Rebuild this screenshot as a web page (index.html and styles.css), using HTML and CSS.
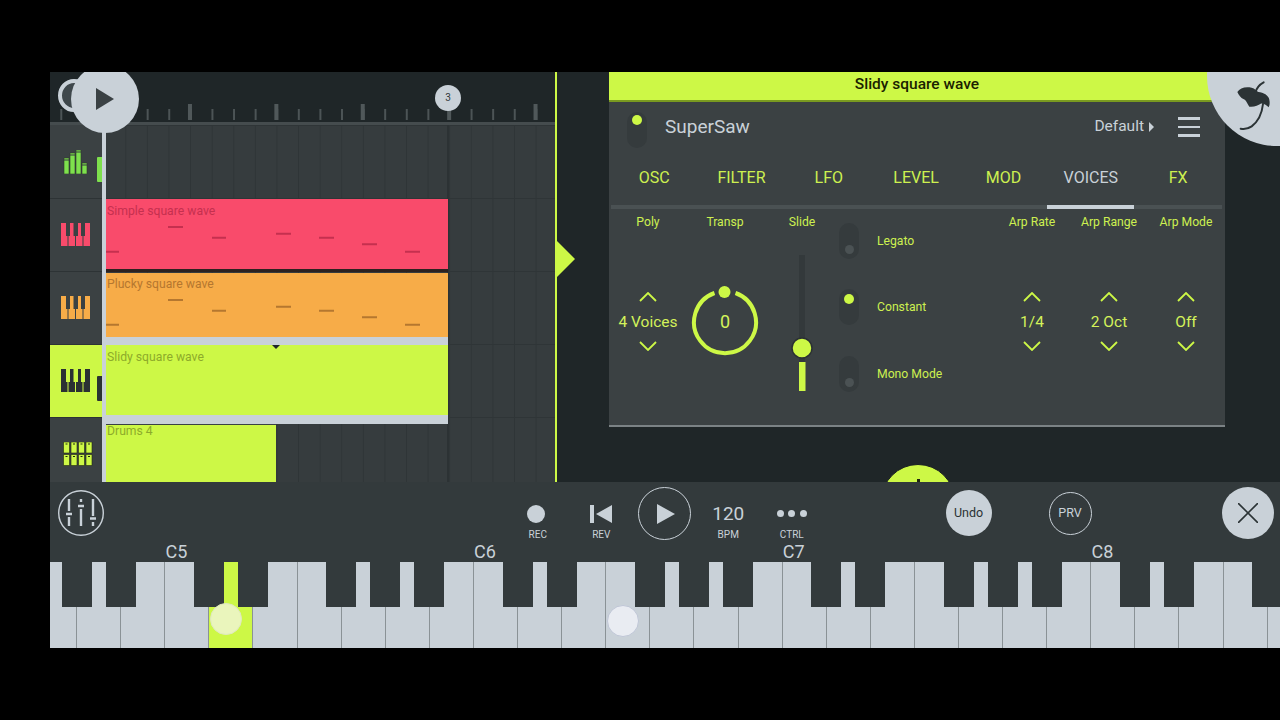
FILE: index.html

```html
<!DOCTYPE html>
<html>
	<head>
		<title>Slidy square wave</title>
		<meta charset="UTF-8">
		<link rel="stylesheet" href="styles.css">
	</head>
	<body>
		<div class="app">
			<div class="top">
				<div class="playlist">
					<div class="ruler"></div>
					<div class="tracks">
						<div class="icons">
							<div class="icon-row first">
								<svg class="ticon" viewBox="0 0 34 24"><path fill="#7ee04d" stroke="#2b3a2a" stroke-width=".6" d="M3 8h5v16H3zM9 3h5v21H9zM15 0h5v24h-5zM21 13h5v11h-5z"/><path stroke="#343a3c" d="M3 10h5M9 5h5M15 2h5M21 15h5"/></svg>
								<span class="vol green"></span>
							</div>
							<div class="icon-row pink">
								<svg class="ticon" viewBox="0 0 34 24"><path fill="currentColor" d="M0 0H5V13H6.5V23H0ZM9 0H12.5V13H14V23H7.5V13H9ZM17 0H20V13H21.5V23H15V13H17ZM24 0H29V23H22.5V13H24Z"/></svg>
							</div>
							<div class="icon-row orange">
								<svg class="ticon" viewBox="0 0 34 24"><path fill="currentColor" d="M0 0H5V13H6.5V23H0ZM9 0H12.5V13H14V23H7.5V13H9ZM17 0H20V13H21.5V23H15V13H17ZM24 0H29V23H22.5V13H24Z"/></svg>
							</div>
							<div class="icon-row selected">
								<svg class="ticon" viewBox="0 0 34 24"><path fill="currentColor" d="M0 0H5V13H6.5V23H0ZM9 0H12.5V13H14V23H7.5V13H9ZM17 0H20V13H21.5V23H15V13H17ZM24 0H29V23H22.5V13H24Z"/></svg>
								<span class="vol dark"></span>
							</div>
							<div class="icon-row lime">
								<svg class="ticon" viewBox="0 0 34 24"><path fill="currentColor" stroke="#20280f" stroke-width=".6" d="M2.5 0h6v11h-6zM10 0h6v11h-6zM17.5 0h6v11h-6zM25 0h6v11h-6zM2.5 12.5h6v11h-6zM10 12.5h6v11h-6zM17.5 12.5h6v11h-6zM25 12.5h6v11h-6z"/><path stroke="#20280f" d="M4.5 2h2M12 2h2M19.5 2h2M27 2h2M4.5 14.500h2M12 14.500h2M19.5 14.500h2M27 14.500h2"/></svg>
							</div>
						</div>
						<div class="lanes">
							<div class="clip clip-simple">
								<div class="clip-name">Simple square wave</div>
								<svg class="notes" viewBox="0 0 342 40"><path stroke="currentColor" stroke-width="2" d="M62 4h15M0 28.700h13M106 14.700h14M170 10.700h15M213 14.700h15M256 21.300h15M299 28.700h15"/></svg>
							</div>
							<div class="clip clip-plucky">
								<div class="clip-name">Plucky square wave</div>
								<svg class="notes" viewBox="0 0 342 40"><path stroke="currentColor" stroke-width="2" d="M62 4h15M0 28.700h13M106 14.700h14M170 10.700h15M213 14.700h15M256 21.300h15M299 28.700h15"/></svg>
							</div>
							<div class="clip clip-slidy">
								<div class="clip-name">Slidy square wave</div>
								<span class="clip-mark"></span>
							</div>
							<div class="clip clip-drums">
								<div class="clip-name">Drums 4</div>
							</div>
						</div>
					</div>
				</div>
				<div class="panel">
					<div class="panel-title">Slidy square wave</div>
					<div class="panel-head">
						<div class="toggle on head-toggle"><span></span></div>
						<div class="synth-name">SuperSaw</div>
						<div class="preset">Default</div>
						<span class="preset-arrow"></span>
						<div class="burger"><span></span><span></span><span></span></div>
					</div>
					<div class="tabs">
						<div class="tab">OSC</div>
						<div class="tab">FILTER</div>
						<div class="tab">LFO</div>
						<div class="tab">LEVEL</div>
						<div class="tab">MOD</div>
						<div class="tab active">VOICES</div>
						<div class="tab">FX</div>
					</div>
					<div class="voices">
						<div class="col">
							<div class="col-label">Poly</div>
							<div class="stepper">
								<svg class="chev" viewBox="0 0 18 10"><path d="M1 9L9 1L17 9"/></svg>
								<div class="step-value">4 Voices</div>
								<svg class="chev" viewBox="0 0 18 10"><path d="M1 1L9 9L17 1"/></svg>
							</div>
						</div>
						<div class="col">
							<div class="col-label">Transp</div>
							<svg class="knob" viewBox="0 0 72 72">
								<path class="knob-ring" d="M25.500 7A31 31 0 1 0 46.500 7"/>
								<circle class="knob-dot" cx="35.500" cy="6" r="6"/>
								<text class="knob-value" x="36" y="42" text-anchor="middle">0</text>
							</svg>
						</div>
						<div class="col">
							<div class="col-label">Slide</div>
							<svg class="slider" viewBox="0 0 24 140">
								<rect x="9" y="3" width="6" height="136" fill="#33393b"/>
								<rect x="9" y="110" width="6.500" height="29" fill="#cdf846"/>
								<circle cx="12" cy="96" r="10" fill="#cdf846" stroke="#2b3133" stroke-width="1.500"/>
							</svg>
						</div>
						<div class="switches">
							<div class="switch"><div class="toggle"><span></span></div><div class="switch-name">Legato</div></div>
							<div class="switch"><div class="toggle on"><span></span></div><div class="switch-name">Constant</div></div>
							<div class="switch"><div class="toggle"><span></span></div><div class="switch-name">Mono Mode</div></div>
						</div>
						<div class="col">
							<div class="col-label">Arp Rate</div>
							<div class="stepper">
								<svg class="chev" viewBox="0 0 18 10"><path d="M1 9L9 1L17 9"/></svg>
								<div class="step-value">1/4</div>
								<svg class="chev" viewBox="0 0 18 10"><path d="M1 1L9 9L17 1"/></svg>
							</div>
						</div>
						<div class="col">
							<div class="col-label">Arp Range</div>
							<div class="stepper">
								<svg class="chev" viewBox="0 0 18 10"><path d="M1 9L9 1L17 9"/></svg>
								<div class="step-value">2 Oct</div>
								<svg class="chev" viewBox="0 0 18 10"><path d="M1 1L9 9L17 1"/></svg>
							</div>
						</div>
						<div class="col">
							<div class="col-label">Arp Mode</div>
							<div class="stepper">
								<svg class="chev" viewBox="0 0 18 10"><path d="M1 9L9 1L17 9"/></svg>
								<div class="step-value">Off</div>
								<svg class="chev" viewBox="0 0 18 10"><path d="M1 1L9 9L17 1"/></svg>
							</div>
						</div>
					</div>
				</div>
				<!-- things lying over the panels -->
				<div class="loop-ring"></div>
				<div class="big-play"><span></span></div>
				<div class="marker">3</div>
				<span class="pos-arrow"></span>
				<div class="add-btn"><span></span></div>
				<svg class="logo" viewBox="0 12 270 234">
					<circle cx="261" cy="24" r="210" fill="#c9d1d8"/>
					<path fill="#2b3335" d="M142 72C150 60 165 55 185 59C195 61 198 69 205 72C220 73 236 82 238 95C240 105 239 112 236 118C228 110 220 106 212 107C205 112 192 118 178 116C170 105 170 97 160 93C153 90 146 82 142 72Z"/>
					<path fill="none" stroke="#2b3335" stroke-width="6" stroke-linecap="round" d="M197 72C200 60 208 50 221 43M219 108C216 135 205 160 185 175C175 182 162 184 152 182"/>
				</svg>
			</div>
			<div class="bottom">
				<div class="controls">
					<svg class="mixer" viewBox="0 0 46 46">
						<circle cx="23" cy="23" r="22.300" fill="none" stroke="#c9d1d8" stroke-width="1.400"/>
						<path fill="none" stroke="#c9d1d8" stroke-width="2.400" d="M11 9v12M11 27v9M8 24h6M23 9v3M20 16h6M23 19v17M35 9v17M32 28.500h6M35 32v4"/>
					</svg>
					<div class="transport">
						<div class="tool">
							<div class="tool-icon"><span class="rec-dot"></span></div>
							<div class="tool-label">REC</div>
						</div>
						<div class="tool">
							<div class="tool-icon"><svg class="rev" viewBox="0 0 22 18"><path fill="#c9d1d8" d="M0 0h4v18H0zM22 0v18L6 9z"/></svg></div>
							<div class="tool-label">REV</div>
						</div>
						<div class="tool">
							<div class="play-ring"><span></span></div>
						</div>
						<div class="tool">
							<div class="tool-icon bpm">120</div>
							<div class="tool-label">BPM</div>
						</div>
						<div class="tool">
							<div class="tool-icon dots"><span></span><span></span><span></span></div>
							<div class="tool-label">CTRL</div>
						</div>
					</div>
					<div class="undo">Undo</div>
					<div class="prv">PRV</div>
					<div class="close">
						<svg viewBox="0 0 20 20"><path stroke="#2b3335" stroke-width="1.600" d="M0 0L20 20M20 0L0 20"/></svg>
					</div>
				</div>
				<div class="octaves">
					<div class="octave">C5</div>
					<div class="octave">C6</div>
					<div class="octave">C7</div>
					<div class="octave">C8</div>
				</div>
				<div class="keys">
					<div class="whites">
						<div class="white"></div><div class="white"></div><div class="white"></div><div class="white"></div>
						<div class="white pressed"></div><div class="white"></div><div class="white"></div><div class="white"></div>
						<div class="white"></div><div class="white"></div><div class="white"></div><div class="white"></div>
						<div class="white"></div><div class="white"></div><div class="white"></div><div class="white"></div>
						<div class="white"></div><div class="white"></div><div class="white"></div><div class="white"></div>
						<div class="white"></div><div class="white"></div><div class="white"></div><div class="white"></div>
						<div class="white"></div><div class="white"></div><div class="white"></div><div class="white"></div>
						<div class="white"></div>
					</div>
					<div class="blacks">
						<div class="black"></div><div class="black gap"></div>
						<div class="black"></div><div class="black gap"></div>
						<div class="black"></div><div class="black"></div><div class="black gap"></div>
						<div class="black"></div><div class="black gap"></div>
						<div class="black"></div><div class="black"></div><div class="black gap"></div>
						<div class="black"></div><div class="black gap"></div>
						<div class="black"></div><div class="black"></div><div class="black gap"></div>
						<div class="black"></div><div class="black gap"></div>
						<div class="black"></div>
					</div>
					<div class="touch touch-lime"></div>
					<div class="touch touch-white"></div>
				</div>
			</div>
		</div>
	</body>
</html>
```

FILE: styles.css

```css
/* common */
html, body {
	margin: 0; padding: 0; background-color: #000; height: 720px; overflow: hidden;
}
* {
	font-family: "Roboto", "Liberation Sans", sans-serif; box-sizing: border-box;
}
.app {
	position: relative; width: 1230px; height: 576px; margin: 72px 0 0 50px; overflow: hidden; display: flex; flex-direction: column;
}
.top {
	position: relative; display: flex; height: 410px; background-color: #1f2628; overflow: hidden; flex: none;
}
.bottom {
	height: 166px; background-color: #333a3c; display: flex; flex-direction: column; flex: none;
}

/* playlist */
.playlist {
	width: 507px; border-right: 2px solid #cdf846; display: flex; flex-direction: column; flex: none;
}
.ruler {
	height: 53px; flex: none; border-bottom: 3px solid #454c4e; background-color: #1f2628; background-repeat: repeat-x;
	background-image:
		linear-gradient(to right, #50585a 4px, transparent 4px),
		linear-gradient(to right, #4c5456 2px, transparent 2px);
	background-size: 86.400px 16px, 21.600px 11px;
	background-position: 51.600px 32px, 10.300px 37px;
}
.tracks {
	flex: 1; display: flex; min-height: 0; overflow: hidden;
}
.icons {
	width: 56px; flex: none; border-right: 4px solid #c9d1d8; background-color: #3b4143;
}
.icon-row {
	height: 73px; display: flex; align-items: center; justify-content: space-between; padding-left: 11px; border-bottom: 1px solid #2d3335;
}
.icon-row.first { height: 74px; }
.icon-row.pink { color: #f94b6b; }
.icon-row.orange { color: #f7ac48; }
.icon-row.lime { color: #cdf846; }
.icon-row.selected { color: #2b3133; background-color: #cdf846; }
.ticon {
	width: 34px; height: 24px; flex: none;
}
.vol {
	width: 5px; align-self: flex-end; margin-bottom: 16px; border-radius: 1px 0 0 1px;
}
.vol.green { height: 25px; background-color: #7ee04d; }
.vol.dark { height: 25px; background-color: #2b3133; }

.lanes {
	flex: 1; padding-top: 74px; background-color: #363c3e;
	background-image:
		linear-gradient(to right, #2c3234 2px, transparent 2px),
		linear-gradient(to right, #2f3537 1px, transparent 1px),
		linear-gradient(#2f3537 1px, transparent 1px);
	background-size: 100% 100%, 21.600px 100%, 100% 73px;
	background-position: 341px 0, 19.300px 0, 0 0;
	background-repeat: no-repeat, repeat, repeat;
}
.clip {
	width: 342px; display: flex; flex-direction: column; position: relative;
}
.clip-name {
	font-size: 12.200px; padding-left: 1px; line-height: 24px;
}
.notes {
	display: block; width: 342px; height: 40px;
}
.clip-simple {
	height: 73px; background-color: #f94b6b; color: #c5304f; border-bottom: 3px solid #2d2220; margin-bottom: 1px;
}
.clip-plucky {
	height: 72px; background-color: #f7ac48; color: #b5772f; border-bottom: 8px solid #c9d1d8;
}
.clip-plucky .clip-name { line-height: 23px; }
.clip-slidy {
	height: 79px; background-color: #cdf846; color: #8dab2a; border-bottom: 9px solid #c9d1d8;
}
.clip-drums {
	height: 60px; width: 170px; background-color: #cdf846; color: #8dab2a; border-top: 1px solid #3a4144;
}
.clip-drums .clip-name { line-height: 13px; }
.clip-mark {
	position: absolute; left: 166px; top: 0; width: 0; height: 0; border-left: 4px solid transparent; border-right: 4px solid transparent; border-top: 4px solid #1f2628;
}

/* instrument panel */
.panel {
	width: 616px; height: 355px; margin-left: 52px; background-color: #3b4143; border-bottom: 2px solid #7b8285; flex: none; display: flex; flex-direction: column;
}
.panel-title {
	height: 30px; flex: none; background-color: #cdf846; border-bottom: 2px solid #7a9a20; color: #1a2200; font-size: 15.500px; font-weight: 500; text-align: center; line-height: 25px;
}
.panel-head {
	height: 58px; flex: none; display: flex; align-items: center; padding-left: 18px; position: relative;
}
.toggle {
	width: 20px; height: 36px; border-radius: 10px; background-color: #353b3d; display: flex; flex-direction: column; justify-content: flex-end; align-items: center; padding: 5px 0; flex: none;
}
.toggle span {
	width: 9px; height: 9px; border-radius: 50%; background-color: #4b5254;
}
.toggle.on { justify-content: flex-start; }
.toggle.on span { width: 10px; height: 10px; background-color: #cdf846; }
.head-toggle {
	margin-top: -3px; padding-top: 3px;
}
.synth-name {
	margin-left: 18px; font-size: 19px; color: #c9d1d8; margin-top: -10px;
}
.preset {
	margin-left: auto; font-size: 15.500px; color: #c9d1d8; margin-top: -10px;
}
.preset-arrow {
	width: 0; height: 0; border-left: 5px solid #c9d1d8; border-top: 5px solid transparent; border-bottom: 5px solid transparent; margin: -8px 24px 0 5px;
}
.burger {
	width: 22px; margin-right: 25px; display: flex; flex-direction: column; gap: 6px; margin-top: -8px;
}
.burger span {
	height: 2.500px; background-color: #c9d1d8;
}
.tabs {
	display: grid; grid-template-columns: repeat(7, 87.330px); padding-left: 1.500px; height: 49px; flex: none;
}
.tab {
	color: #cdf050; font-size: 16px; text-align: center; border-bottom: 4px solid #4a5153; padding-top: 8px; line-height: 20px;
}
.tab.active {
	color: #c9d1d8; border-bottom-color: #c9d1d8;
}

/* voices page */
.voices {
	display: flex; flex: 1; padding: 6px 0 0 .5px;
}
.col {
	width: 77px; flex: none; display: flex; flex-direction: column; align-items: center;
}
.col-label {
	color: #cdf050; font-size: 12.200px; line-height: 14px; white-space: nowrap;
}
.stepper {
	margin-top: 63px; display: flex; flex-direction: column; align-items: center; gap: 9.500px;
}
.chev {
	width: 18px; height: 10px; display: block;
}
.chev path {
	fill: none; stroke: #cdf846; stroke-width: 1.800;
}
.step-value {
	color: #d4f25a; font-size: 15.500px; line-height: 20px; white-space: nowrap;
}
.knob {
	width: 72px; height: 72px; margin-top: 57px; display: block;
}
.knob-ring {
	fill: none; stroke: #cdf846; stroke-width: 4;
}
.knob-dot {
	fill: #cdf846;
}
.knob-value {
	fill: #d4f25a; font-size: 18px;
}
.slider {
	width: 24px; height: 140px; margin-top: 23px; display: block;
}
.switches {
	width: 153px; flex: none; display: flex; flex-direction: column; gap: 30.500px; padding-top: 7.500px; margin-left: -1.500px; margin-right: 1.500px;
}
.switch {
	display: flex; align-items: center;
}
.switch-name {
	margin-left: 18px; color: #cdf050; font-size: 12.200px; white-space: nowrap;
}

/* overlays */
.big-play {
	position: absolute; left: 21px; top: -7px; width: 68px; height: 68px; border-radius: 50%; background-color: #c9d1d8; display: flex; align-items: center; justify-content: center;
}
.big-play span {
	width: 0; height: 0; border-left: 18px solid #3a4144; border-top: 11px solid transparent; border-bottom: 11px solid transparent;
}
.loop-ring {
	position: absolute; left: 8px; top: 7px; width: 32px; height: 33px; border-radius: 50%; background-color: #3f484c; border: 4.500px solid #c9d1d8;
}
.marker {
	position: absolute; left: 385px; top: 13px; width: 26px; height: 26px; border-radius: 50%; background-color: #c9d1d8; color: #333a3c; font-size: 10px; text-align: center; line-height: 26px;
}
.pos-arrow {
	position: absolute; left: 507px; top: 169px; width: 0; height: 0; border-left: 18px solid #cdf846; border-top: 18px solid transparent; border-bottom: 18px solid transparent;
}
.add-btn {
	position: absolute; left: 831px; top: 392px; width: 74px; height: 74px; border-radius: 50%; background-color: #cdf846; border: 1px solid #1a2022;
}
.add-btn span {
	display: block; width: 3px; height: 4px; background-color: #20280f; margin: 14px auto 0;
}
.logo {
	position: absolute; right: 0; top: 0; width: 90px; height: 78px;
}

/* controls */
.controls {
	height: 60px; flex: none; display: flex; align-items: center; padding: 2px 0 0 8px;
}
.mixer {
	width: 46px; height: 46px; flex: none;
}
.transport {
	display: flex; margin-left: 402px; align-self: flex-start; padding-top: 17px; flex: none;
}
.tool {
	width: 63.500px; display: flex; flex-direction: column; align-items: center;
}
.tool-icon {
	height: 25px; margin-bottom: 2px; display: flex; align-items: center; justify-content: center;
}
.tool-label {
	color: #c9d1d8; font-size: 10px; line-height: 14px;
}
.rec-dot {
	width: 18px; height: 18px; border-radius: 50%; background-color: #c9d1d8; margin-left: -4px;
}
.rev {
	width: 22px; height: 18px; display: block;
}
.play-ring {
	width: 53px; height: 53px; margin-top: -14px; border: 1.400px solid #c9d1d8; border-radius: 50%; display: flex; align-items: center; justify-content: center;
}
.play-ring span {
	width: 0; height: 0; border-left: 18px solid #c9d1d8; border-top: 10px solid transparent; border-bottom: 10px solid transparent; margin-left: 3px;
}
.bpm {
	color: #c9d1d8; font-size: 19px;
}
.dots {
	gap: 4.500px;
}
.dots span {
	width: 7px; height: 7px; border-radius: 50%; background-color: #c9d1d8;
}
.undo {
	width: 46px; height: 46px; margin-left: 122px; border-radius: 50%; background-color: #c9d1d8; color: #2b3335; font-size: 12.500px; text-align: center; line-height: 46px; flex: none;
}
.prv {
	width: 43px; height: 43px; margin-left: 57px; border-radius: 50%; border: 1.400px solid #c9d1d8; color: #c9d1d8; font-size: 12.500px; text-align: center; line-height: 40px; flex: none;
}
.close {
	width: 52px; height: 52px; margin-left: 130px; border-radius: 50%; background-color: #c9d1d8; display: flex; align-items: center; justify-content: center; flex: none;
}
.close svg {
	width: 20px; height: 20px;
}
.octaves {
	height: 20px; flex: none; display: flex; margin-left: -28px;
}
.octave {
	width: 308.700px; flex: none; text-align: center; color: #c9d1d8; font-size: 18px; line-height: 20px;
}

/* keyboard */
.keys {
	position: relative; height: 86px; flex: none; overflow: hidden;
}
.whites {
	display: flex; height: 100%; margin-left: -17px;
}
.white {
	width: 44.100px; flex: none; background-color: #c9d1d8; border-right: 1px solid #8a9296;
}
.white.pressed {
	background-color: #cdf846;
}
.blacks {
	position: absolute; left: 11.700px; top: 0; display: flex; height: 45px;
}
.black {
	width: 30px; flex: none; margin-right: 14.100px; background-color: #333a3c;
}
.black.gap {
	margin-right: 58.200px;
}
.touch {
	position: absolute; width: 32px; height: 32px; border-radius: 50%;
}
.touch-lime {
	left: 160px; top: 41px; background-color: #eaf5bc; border: 1px solid #dfe8c0;
}
.touch-white {
	left: 557px; top: 43px; background-color: #e9ecf2; border: 1px solid #bfc6d6;
}
```
